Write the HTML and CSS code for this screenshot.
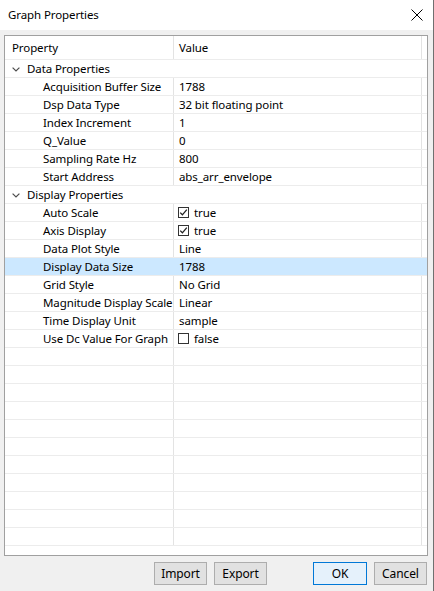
FILE: index.html
```html
<!DOCTYPE html>
<html>
<head>
<meta charset="utf-8">
<link rel="stylesheet" href="styles.css">
</head>
<body>
<div class="window">
  <div class="titlebar">
    <span class="title">Graph Properties</span>
    <svg class="close" width="12" height="12" viewBox="0 0 12 12"><path d="M0.5 0.5 L11.5 11.5 M11.5 0.5 L0.5 11.5" stroke="#000" stroke-width="1" fill="none"/></svg>
  </div>
  <div class="content">
    <div class="panel">
      <div class="row head"><div class="name">Property</div><div class="val">Value</div></div>
      <div class="row cat"><svg class="chev" width="8" height="5" viewBox="0 0 8 5"><path d="M0.6 0.6 L4 4 L7.4 0.6" stroke="#4d4d4d" stroke-width="1.2" fill="none"/></svg>Data Properties</div>
      <div class="row"><div class="name">Acquisition Buffer Size</div><div class="val">1788</div></div>
      <div class="row"><div class="name">Dsp Data Type</div><div class="val">32 bit floating point</div></div>
      <div class="row"><div class="name">Index Increment</div><div class="val">1</div></div>
      <div class="row"><div class="name">Q_Value</div><div class="val">0</div></div>
      <div class="row"><div class="name">Sampling Rate Hz</div><div class="val">800</div></div>
      <div class="row"><div class="name">Start Address</div><div class="val">abs_arr_envelope</div></div>
      <div class="row cat"><svg class="chev" width="8" height="5" viewBox="0 0 8 5"><path d="M0.6 0.6 L4 4 L7.4 0.6" stroke="#4d4d4d" stroke-width="1.2" fill="none"/></svg>Display Properties</div>
      <div class="row"><div class="name">Auto Scale</div><div class="val"><span class="cb"><svg width="9" height="9" viewBox="0 0 9 9"><path d="M1.2 4.6 L3.4 6.8 L7.8 1.6" stroke="#222" stroke-width="1.3" fill="none"/></svg></span>true</div></div>
      <div class="row"><div class="name">Axis Display</div><div class="val"><span class="cb"><svg width="9" height="9" viewBox="0 0 9 9"><path d="M1.2 4.6 L3.4 6.8 L7.8 1.6" stroke="#222" stroke-width="1.3" fill="none"/></svg></span>true</div></div>
      <div class="row"><div class="name">Data Plot Style</div><div class="val">Line</div></div>
      <div class="row sel"><div class="name">Display Data Size</div><div class="val">1788</div></div>
      <div class="row"><div class="name">Grid Style</div><div class="val">No Grid</div></div>
      <div class="row"><div class="name">Magnitude Display Scale</div><div class="val">Linear</div></div>
      <div class="row"><div class="name">Time Display Unit</div><div class="val">sample</div></div>
      <div class="row"><div class="name">Use Dc Value For Graph</div><div class="val"><span class="cb"></span>false</div></div>
      <div class="row"><div class="name"></div><div class="val"></div></div>
      <div class="row"><div class="name"></div><div class="val"></div></div>
      <div class="row"><div class="name"></div><div class="val"></div></div>
      <div class="row"><div class="name"></div><div class="val"></div></div>
      <div class="row"><div class="name"></div><div class="val"></div></div>
      <div class="row"><div class="name"></div><div class="val"></div></div>
      <div class="row"><div class="name"></div><div class="val"></div></div>
      <div class="row"><div class="name"></div><div class="val"></div></div>
      <div class="row"><div class="name"></div><div class="val"></div></div>
      <div class="row"><div class="name"></div><div class="val"></div></div>
      <div class="row"><div class="name"></div><div class="val"></div></div>
    </div>
    <div class="buttons">
      <button class="btn">Import</button>
      <button class="btn">Export</button>
      <button class="btn ok">OK</button>
      <button class="btn">Cancel</button>
    </div>
  </div>
</div>
</body>
</html>
```

FILE: styles.css
```css
* { box-sizing: border-box; }
html, body {
  margin: 0;
  padding: 0;
}
body {
  font-family: "Noto Sans", "Open Sans", sans-serif;
  font-size: 11.5px;
  letter-spacing: -0.1px;
  color: #000;
  background: #f0f0f0;
}
.window {
  width: 434px;
  height: 591px;
  background: #f0f0f0;
  border-right: 1px solid #707070;
  display: flex;
  flex-direction: column;
}
.titlebar {
  height: 30px;
  background: #fff;
  display: flex;
  align-items: center;
  justify-content: space-between;
  padding: 0 10px 0 8px;
}
.title {
  line-height: 30px;
}
.close {
  display: block;
  margin-top: -1px;
}
.content {
  padding: 5px 6px 0 4px;
  display: flex;
  flex-direction: column;
}
.panel {
  width: 424px;
  height: 521px;
  background: #fff;
  border: 1px solid #a0a0a0;
  overflow: hidden;
}
.row {
  display: flex;
  height: 18px;
  border-bottom: 1px solid #ececec;
  line-height: 18px;
  white-space: nowrap;
}
.row .name {
  width: 169px;
  padding-left: 38px;
  border-right: 1px solid #e3e3e3;
  overflow: hidden;
}
.row .val {
  width: 248px;
  padding-left: 5px;
  border-right: 1px solid #e3e3e3;
  display: flex;
  align-items: center;
}
.row.head {
  height: 24px;
  line-height: 23px;
}
.row.head .name {
  padding-left: 7px;
}
.row.cat {
  padding-left: 7px;
  align-items: center;
}
.chev {
  display: block;
  margin-right: 7px;
  margin-top: 1px;
}
.row.sel {
  background: #cce8ff;
}
.row.sel .name,
.row.sel .val {
  border-right-color: #cce8ff;
}
.cb {
  width: 11px;
  height: 11px;
  border: 1px solid #333;
  background: #fff;
  margin-left: -1px;
  margin-right: 5px;
  display: flex;
  align-items: center;
  justify-content: center;
}
.cb svg { display: block; }
.buttons {
  display: flex;
  justify-content: flex-end;
  gap: 7px;
  margin-top: 6px;
}
.btn {
  width: 53px;
  height: 23px;
  border: 1px solid #adadad;
  background: #e1e1e1;
  font-family: inherit;
  font-size: 12px;
  letter-spacing: -0.1px;
  color: #000;
  padding: 0;
  margin: 0;
}
.btn.ok {
  width: 54px;
  margin-left: 39px;
  border-color: #0078d7;
  background: #e5f1fb;
}
```
